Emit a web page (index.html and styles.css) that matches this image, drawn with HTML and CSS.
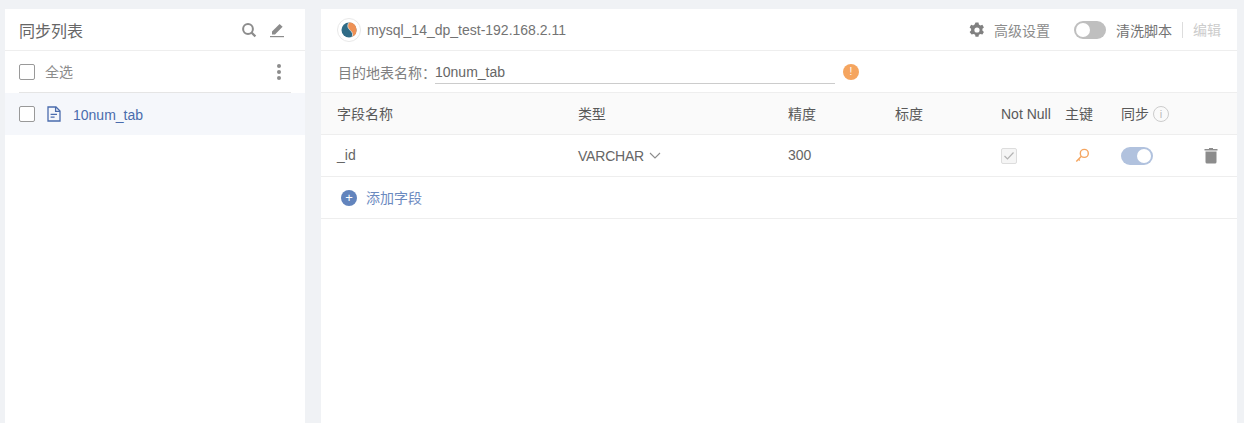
FILE: index.html
```html
<!DOCTYPE html>
<html lang="zh">
<head>
    <meta charset="UTF-8">
    <title>同步列表</title>
    <link rel="stylesheet" href="styles.css">
</head>
<body>
    <div class="page">
        <div class="side">
            <div class="side-head">
                <span class="side-title">同步列表</span>
                <svg class="search-icon" width="16" height="16" viewBox="0 0 16 16"><circle cx="7" cy="7" r="4.9" fill="none" stroke="#8c8c8c" stroke-width="2"/><path d="M10.6 10.6L14.4 14.4" stroke="#8c8c8c" stroke-width="2.2"/></svg>
                <svg class="pen-icon" width="16" height="16" viewBox="0 0 16 16"><path d="M3 9.600L10.600 2l3 2.800-7.600 7.600H3z" fill="#8c8c8c"/><rect x="1" y="14" width="14" height="1.200" fill="#8c8c8c"/></svg>
            </div>
            <div class="check-all">
                <span class="box"></span>
                <span class="all-label">全选</span>
                <span class="dots"><i></i><i></i><i></i></span>
            </div>
            <div class="side-item">
                <span class="box"></span>
                <svg class="file-icon" width="14" height="16" viewBox="0 0 14 16"><path d="M1 1h8l4 4v10H1z" fill="none" stroke="#4a6cad" stroke-width="1.3"/><path d="M8.600 1v4.400H13" fill="none" stroke="#4a6cad" stroke-width="1.3"/><path d="M3.600 8.400h6.400M3.600 11.200h4" stroke="#4a6cad" stroke-width="1.2"/></svg>
                <span class="item-name">10num_tab</span>
            </div>
        </div>
        <div class="main">
            <div class="main-head">
                <span class="db-logo">
                    <svg width="24" height="24" viewBox="0 0 24 24"><circle cx="12" cy="12" r="11.500" fill="#fff" stroke="#e8e8e8"/><circle cx="12" cy="12" r="7.500" fill="#2f6b86"/><path d="M12 4.500a7.500 7.500 0 0 1 3 14.400c1.200-2.400.6-4.500-1.800-6.600S9.800 7.500 12 4.500z" fill="#ee9155"/><path d="M12 4.500c-2.200 3-1.200 5.700 1.200 7.800s3 4.200 1.800 6.600" fill="none" stroke="#dfe7ea" stroke-width="0.8"/></svg>
                </span>
                <span class="db-name">mysql_14_dp_test-192.168.2.11</span>
                <svg class="gear-icon" width="16" height="16" viewBox="0 0 16 16"><path fill-rule="evenodd" d="M6.500.6h3l.4 2 1.500.9 2-.7 1.500 2.600-1.500 1.400v1.800l1.500 1.400-1.500 2.600-2-.7-1.500.9-.4 2h-3l-.4-2-1.500-.9-2 .7L.6 10l1.500-1.400V6.800L.6 5.400l1.500-2.600 2 .7 1.500-.9zM8 5.400a2.400 2.400 0 1 0 0 5.200 2.400 2.400 0 0 0 0-5.200z" fill="#808080"/></svg>
                <span class="head-link">高级设置</span>
                <span class="switch off"><i></i></span>
                <span class="clean-label">清洗脚本</span>
                <span class="edit-link">编辑</span>
            </div>
            <div class="name-row">
                <span class="name-label">目的地表名称：</span>
                <span class="name-input">10num_tab</span>
                <span class="warn">!</span>
            </div>
            <div class="row table-head">
                <span class="col-name lift">字段名称</span>
                <span class="col-type lift">类型</span>
                <span class="col-len lift">精度</span>
                <span class="col-scale lift">标度</span>
                <span class="col-null">Not Null</span>
                <span class="col-key lift">主键</span>
                <span class="col-sync"><span class="lift">同步</span><span class="info">i</span></span>
            </div>
            <div class="row table-row">
                <span class="col-name lift">_id</span>
                <span class="col-type">VARCHAR
                    <svg width="12" height="7" viewBox="0 0 12 7"><path d="M1 1l5 5 5-5" fill="none" stroke="#8c8c8c" stroke-width="1.1"/></svg>
                </span>
                <span class="col-len lift">300</span>
                <span class="col-scale"></span>
                <span class="col-null">
                    <span class="box checked"><svg width="12" height="10" viewBox="0 0 12 10"><path d="M1.500 5l3 3 6-6.500" fill="none" stroke="#b3b3b3" stroke-width="1.2"/></svg></span>
                </span>
                <span class="col-key">
                    <svg width="15" height="15" viewBox="0 0 15 15"><circle cx="9.300" cy="5.400" r="4" fill="none" stroke="#f5a55f" stroke-width="1.400"/><path d="M6.400 8.300L1.300 13.600M3 10.800l1.800 1.800" fill="none" stroke="#f5a55f" stroke-width="1.400"/></svg>
                </span>
                <span class="col-sync"><span class="switch on"><i></i></span></span>
                <svg class="trash-icon" width="14" height="17" viewBox="0 0 14 17"><path d="M5 1h4v1h4.500v1.500H.5V2H5z" fill="#8c8c8c"/><path d="M1.500 4.500h11V15a1.500 1.500 0 0 1-1.500 1.500H3A1.500 1.500 0 0 1 1.500 15z" fill="#8c8c8c"/></svg>
            </div>
            <div class="add-row">
                <span class="add-btn">+</span>
                <span class="add-label lift">添加字段</span>
            </div>
        </div>
    </div>
</body>
</html>
```
FILE: styles.css
```css
html, body {
    height: 100%;
}
body {
    margin: 0;
    overflow: hidden;
    background-color: #f0f2f5;
    color: #666;
    font-family: "Liberation Sans", "Noto Sans CJK SC", sans-serif;
    font-size: 14px;
}
.page {
    display: flex;
    gap: 16px;
    height: 414px;
    padding: 9px 7px 0 5px;
}
.side {
    flex: 0 0 300px;
    background-color: #fff;
}
.main {
    flex: 1;
    background-color: #fff;
}
/* text sits a pixel above the centre of its row */
.lift {
    padding-bottom: 2px;
}

/* left list */
.side-head {
    display: flex;
    align-items: center;
    height: 41px;
    padding: 0 20px 0 14px;
    border-bottom: 1px solid #eee;
}
.side-title {
    flex: 1;
    font-size: 16px;
    color: #666;
}
.pen-icon {
    margin-left: 12px;
}
.check-all {
    display: flex;
    align-items: center;
    height: 41px;
    margin: 0 14px;
    border-bottom: 1px solid #e5e5e5;
}
.box {
    display: inline-flex;
    align-items: center;
    justify-content: center;
    box-sizing: border-box;
    width: 16px;
    height: 16px;
    border: 1px solid #999;
    border-radius: 2px;
    background-color: #fff;
}
.box.checked {
    border-color: #ddd;
    background-color: #f5f5f5;
}
.all-label {
    flex: 1;
    margin-left: 10px;
    padding-bottom: 2px;
    color: #8c8c8c;
}
.dots {
    display: flex;
    flex-direction: column;
    gap: 2px;
    margin-right: 10px;
}
.dots i {
    width: 4px;
    height: 4px;
    border-radius: 50%;
    background-color: #8c8c8c;
}
.side-item {
    display: flex;
    align-items: center;
    height: 42px;
    padding-left: 14px;
    background-color: #f5f7fb;
}
.file-icon {
    margin-left: 12px;
}
.item-name {
    margin-left: 12px;
    padding-top: 2px;
    color: #4a6cad;
}

/* right panel */
.main-head {
    display: flex;
    align-items: center;
    height: 41px;
    padding: 0 16px;
    border-bottom: 1px solid #eee;
}
.db-logo {
    display: flex;
    margin-right: 6px;
}
.db-name {
    flex: 1;
    color: #737373;
}
.head-link {
    margin-left: 9px;
    color: #8c8c8c;
}
.switch {
    display: inline-flex;
    align-items: center;
    box-sizing: border-box;
    width: 32px;
    height: 18px;
    padding: 2px;
    border-radius: 9px;
    background-color: #bfbfbf;
}
.switch i {
    width: 14px;
    height: 14px;
    border-radius: 50%;
    background-color: #fff;
}
.switch.off {
    margin-left: 24px;
}
.switch.on {
    justify-content: flex-end;
    background-color: #b1c2de;
}
.clean-label {
    margin-left: 10px;
    color: #737373;
}
.edit-link {
    margin-left: 10px;
    padding-left: 10px;
    border-left: 1px solid #ddd;
    line-height: 16px;
    color: #ccc;
}
.name-row {
    display: flex;
    align-items: center;
    height: 41px;
    padding-left: 17px;
    border-bottom: 1px solid #eee;
}
.name-label {
    color: #808080;
}
.name-input {
    box-sizing: border-box;
    width: 400px;
    height: 24px;
    margin-left: -1px;
    line-height: 25px;
    border-bottom: 1px solid #ccc;
    color: #666;
}
.warn {
    width: 16px;
    height: 16px;
    margin-left: 8px;
    border-radius: 50%;
    background-color: #f5a55f;
    color: #fff;
    font-size: 10px;
    line-height: 16px;
    text-align: center;
}

/* field table */
.row {
    display: flex;
    align-items: center;
    position: relative;
    padding-left: 16px;
    border-bottom: 1px solid #eee;
}
.table-head {
    height: 41px;
    background-color: #fafafa;
    color: #595959;
}
.table-row {
    height: 41px;
}
.col-name {
    width: 241px;
}
.col-type {
    display: flex;
    align-items: center;
    gap: 5px;
    width: 210px;
    letter-spacing: -0.2px;
}
.col-len {
    width: 107px;
}
.col-scale {
    width: 106px;
}
.col-null {
    width: 64px;
    display: flex;
}
.col-key {
    width: 56px;
    display: flex;
}
.table-row .col-key {
    padding-left: 10px;
    width: 46px;
}
.col-sync {
    display: flex;
    align-items: center;
    gap: 4px;
}
.info {
    box-sizing: border-box;
    width: 16px;
    height: 16px;
    border: 1px solid #ccc;
    border-radius: 50%;
    color: #bbb;
    font-size: 11px;
    line-height: 14px;
    text-align: center;
}
.trash-icon {
    position: absolute;
    right: 19px;
    top: 12px;
}
.add-row {
    display: flex;
    align-items: center;
    height: 41px;
    padding-left: 20px;
    border-bottom: 1px solid #eee;
}
.add-btn {
    width: 16px;
    height: 16px;
    border-radius: 50%;
    background-color: #6284bd;
    color: #fff;
    font-size: 13px;
    line-height: 15px;
    text-align: center;
}
.add-label {
    margin-left: 9px;
    color: #6c8abf;
}
```
